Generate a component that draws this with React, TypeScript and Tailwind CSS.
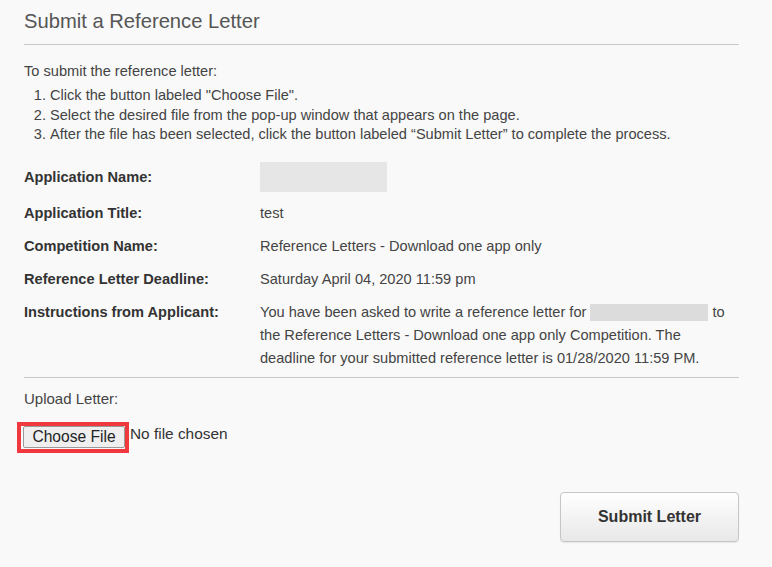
const rows: { label: string; value: React.ReactNode }[] = [
  { label: 'Application Name:', value: <div className="h-[30px] w-[127px] bg-[#e6e6e6]" /> },
  { label: 'Application Title:', value: 'test' },
  { label: 'Competition Name:', value: 'Reference Letters - Download one app only' },
  { label: 'Reference Letter Deadline:', value: 'Saturday April 04, 2020 11:59 pm' },
  {
    label: 'Instructions from Applicant:',
    value: (
      <>
        You have been asked to write a reference letter for{' '}
        <span className="inline-block h-[17px] w-[118px] bg-[#dcdcdc] align-middle" /> to the Reference Letters -
        Download one app only Competition. The deadline for your submitted reference letter is 01/28/2020 11:59 PM.
      </>
    ),
  },
]

export default function App() {
  return (
    <div className="min-h-[567px] w-[772px] bg-[#f9f9f9] font-['Liberation_Sans',Arial,sans-serif] text-[14.6px] text-[#444]">
      <div className="ml-6 w-[715px] pt-[8px]">
        <h1 className="text-[20.2px] leading-[26px] text-[#555]">Submit a Reference Letter</h1>
        <hr className="mt-[10px] border-0 border-t border-[#c8c8c8]" />

        <p className="mt-[16px] leading-[20px]">To submit the reference letter:</p>
        <ol className="mt-[5px] list-decimal pl-[26px] leading-[19.5px]">
          <li>Click the button labeled "Choose File".</li>
          <li>Select the desired file from the pop-up window that appears on the page.</li>
          <li>After the file has been selected, click the button labeled “Submit Letter” to complete the process.</li>
        </ol>

        <div className="mt-[17px] flex flex-col gap-[10px]">
          {rows.map(r => (
            <div key={r.label} className="flex items-start">
              <div className="flex min-h-[23px] w-[236px] shrink-0 items-center font-bold text-[#333]">
                <span className={r.label === 'Application Name:' ? 'leading-[30px]' : 'leading-[23px]'}>{r.label}</span>
              </div>
              <div className="w-[468px] leading-[23px]">{r.value}</div>
            </div>
          ))}
        </div>

        <hr className="mt-[7px] border-0 border-t border-[#c8c8c8]" />

        <p className="mt-[11px] text-[15px] leading-[20px]">Upload Letter:</p>
        <div className="mt-[13px] flex items-start">
          <div className="-ml-[7px] border-[4px] border-[#f0393f] pl-[2px] pb-[1px]">
            <button className="h-[22px] w-[102px] rounded-[2px] border border-[#9a9a9a] bg-[#efefef] text-[15.6px] leading-[20px] text-[#222]">
              Choose File
            </button>
          </div>
          <span className="ml-[1px] text-[15.4px] leading-[24px] text-[#333]">No file chosen</span>
        </div>

        <div className="mt-[39px] flex justify-end">
          <button className="h-[50px] w-[179px] rounded-[4px] border border-[#c6c6c6] bg-gradient-to-b from-white to-[#e8e8e8] text-[16px] font-bold text-[#333] shadow-[0_1px_1px_rgba(0,0,0,0.08)]">
            Submit Letter
          </button>
        </div>
      </div>
    </div>
  )
}
